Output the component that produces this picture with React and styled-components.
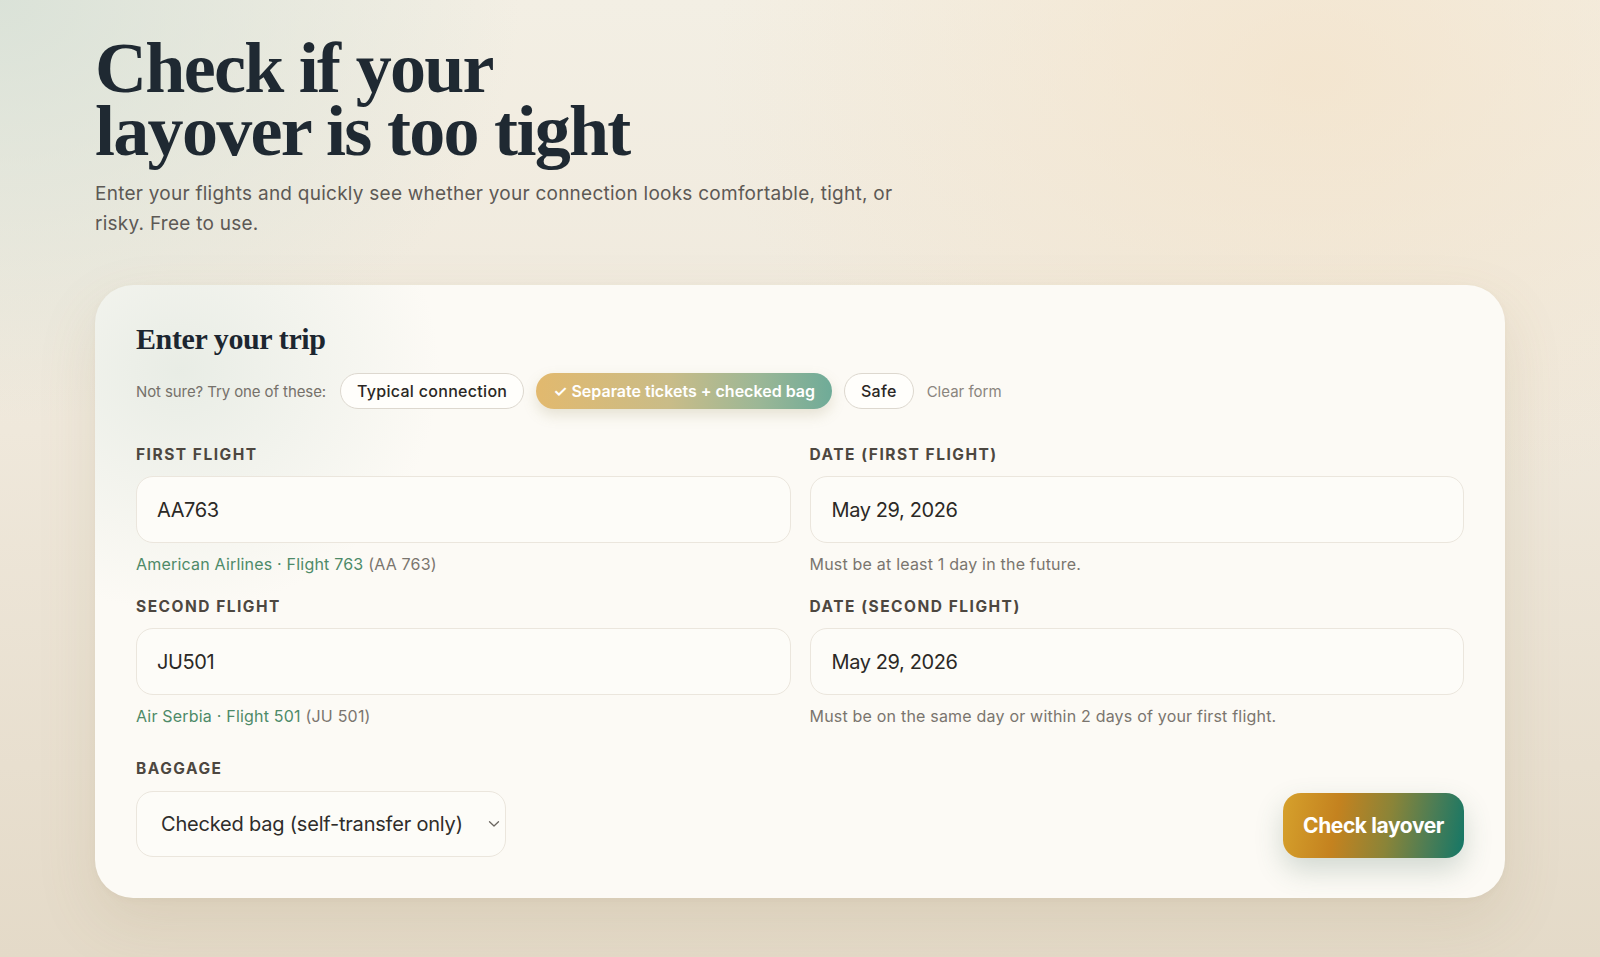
import React from "react";
import styled, { createGlobalStyle } from "styled-components";

const Global = createGlobalStyle`
  * { box-sizing: border-box; }
  html, body { margin: 0; padding: 0; }
  body {
    min-height: 957px;
    font-family: Inter, "Noto Sans", sans-serif;
    background:
      radial-gradient(ellipse 520px 420px at 0% 0%, rgba(214, 224, 214, 0.85), rgba(214, 224, 214, 0) 100%),
      radial-gradient(ellipse 600px 450px at 82% 8%, rgba(244, 226, 200, 0.7), rgba(244, 226, 200, 0) 100%),
      linear-gradient(180deg, #f3efe4 0%, #efe8db 45%, #e8dfcf 80%, #e4dac8 100%);
  }
`;

const Page = styled.main`
  width: 1410px;
  margin: 0 auto;
  padding: 37px 0 40px;
`;

const Title = styled.h1`
  margin: 0;
  font-family: "Liberation Serif", "DejaVu Serif", serif;
  font-weight: 700;
  font-size: 72px;
  line-height: 63px;
  letter-spacing: -1.7px;
  color: #1f2932;
`;

const Lead = styled.p`
  margin: 16px 0 0;
  max-width: 810px;
  font-size: 19px;
  line-height: 29.5px;
  letter-spacing: 0.25px;
  color: #5d5955;
`;

const Card = styled.section`
  margin-top: 47px;
  padding: 36px 41px 41px;
  border-radius: 38px;
  background:
    radial-gradient(ellipse 260px 240px at 6% 14%, rgba(226, 232, 224, 0.75), rgba(226, 232, 224, 0) 100%),
    #fcfaf5;
  box-shadow: 0 24px 60px rgba(140, 115, 70, 0.13), 0 2px 6px rgba(140, 115, 70, 0.05);
`;

const CardTitle = styled.h2`
  margin: 0;
  font-family: "Liberation Serif", "DejaVu Serif", serif;
  font-weight: 700;
  font-size: 30px;
  line-height: 36px;
  letter-spacing: -0.4px;
  color: #1c2630;
`;

const PresetRow = styled.div`
  margin-top: 16px;
  display: flex;
  align-items: center;
  gap: 12px;
`;

const Hint = styled.span`
  font-size: 15px;
  letter-spacing: -0.1px;
  color: #76716a;
  margin-right: 2px;
`;

const Chip = styled.button`
  height: 36px;
  padding: 0 16px;
  border-radius: 18px;
  font-family: Inter, "Noto Sans", sans-serif;
  font-size: 16px;
  font-weight: ${(p) => (p.$active ? 600 : 500)};
  letter-spacing: ${(p) => (p.$active ? "0" : "0.3px")};
  cursor: pointer;
  border: 1px solid ${(p) => (p.$active ? "transparent" : "#ddd8cf")};
  color: ${(p) => (p.$active ? "#ffffff" : "#2a2724")};
  background: ${(p) =>
    p.$active
      ? "linear-gradient(90deg, #e2b96e 0%, #c9bc88 45%, #9cb796 75%, #6fab98 100%) border-box"
      : "#fffefb"};
  box-shadow: ${(p) => (p.$active ? "0 6px 14px rgba(150, 140, 90, 0.22)" : "none")};
`;

const TextLink = styled.button`
  border: 0;
  background: none;
  padding: 0;
  margin-left: 1px;
  font-family: Inter, "Noto Sans", sans-serif;
  font-size: 15px;
  letter-spacing: 0;
  color: #8a857e;
  cursor: pointer;
`;

const Grid = styled.div`
  margin-top: 36px;
  display: grid;
  grid-template-columns: 1fr 1fr;
  column-gap: 19px;
  row-gap: 22px;
`;

const Field = styled.div`
  display: flex;
  flex-direction: column;
`;

const Label = styled.label`
  font-size: 15.5px;
  line-height: 20px;
  font-weight: 700;
  letter-spacing: 1.5px;
  text-transform: uppercase;
  color: #4d4740;
`;

const Input = styled.input`
  margin-top: 11px;
  height: 67px;
  width: 100%;
  padding: 0 ${(p) => p.$pad || 20}px;
  border: 1px solid #ebe6dd;
  border-radius: 17px;
  background: #fdfcf8;
  font-family: Inter, "Noto Sans", sans-serif;
  font-size: 20px;
  letter-spacing: -0.4px;
  color: #2b2926;
  outline: none;
`;

const Help = styled.div`
  margin-top: 10px;
  font-size: 16px;
  line-height: 22px;
  letter-spacing: 0.2px;
  color: #7a756e;
`;

const Airline = styled.span`
  color: #4d8a68;
`;

const Bottom = styled.div`
  margin-top: 32px;
  display: flex;
  align-items: flex-end;
  justify-content: space-between;
`;

const SelectWrap = styled.div`
  position: relative;
  margin-top: 12px;
  width: 370px;
`;

const Select = styled.select`
  appearance: none;
  width: 100%;
  height: 66px;
  padding: 0 30px 0 24px;
  border: 1px solid #ebe6dd;
  border-radius: 17px;
  background: #fdfcf8;
  font-family: Inter, "Noto Sans", sans-serif;
  font-size: 20px;
  letter-spacing: -0.2px;
  color: #2f2d2a;
  outline: none;
`;

const Chevron = styled.svg`
  position: absolute;
  right: 6px;
  top: 50%;
  transform: translateY(-50%);
  pointer-events: none;
`;

const Submit = styled.button`
  width: 181px;
  height: 65px;
  margin-bottom: -1px;
  border: 0;
  border-radius: 18px;
  font-family: Inter, "Noto Sans", sans-serif;
  font-size: 21px;
  font-weight: 700;
  letter-spacing: -0.4px;
  color: #ffffff;
  cursor: pointer;
  background: linear-gradient(100deg, #d6a12c 0%, #c4821f 30%, #8a8438 58%, #4c7d55 80%, #137767 100%);
  box-shadow: 0 12px 28px rgba(60, 100, 80, 0.22);
`;

export default function App() {
  return (
    <>
      <Global />
      <Page>
        <Title>
          Check if your
          <br />
          layover is too tight
        </Title>
        <Lead>
          Enter your flights and quickly see whether your connection looks comfortable, tight, or
          risky. Free to use.
        </Lead>

        <Card>
          <CardTitle>Enter your trip</CardTitle>
          <PresetRow>
            <Hint>Not sure? Try one of these:</Hint>
            <Chip>Typical connection</Chip>
            <Chip $active>✓ Separate tickets + checked bag</Chip>
            <Chip>Safe</Chip>
            <TextLink>Clear form</TextLink>
          </PresetRow>

          <Grid>
            <Field>
              <Label>First flight</Label>
              <Input defaultValue="AA763" />
              <Help>
                <Airline>American Airlines · Flight 763</Airline> (AA 763)
              </Help>
            </Field>
            <Field>
              <Label>Date (first flight)</Label>
              <Input $pad={21} defaultValue="May 29, 2026" />
              <Help>Must be at least 1 day in the future.</Help>
            </Field>
            <Field>
              <Label>Second flight</Label>
              <Input defaultValue="JU501" />
              <Help>
                <Airline>Air Serbia · Flight 501</Airline> (JU 501)
              </Help>
            </Field>
            <Field>
              <Label>Date (second flight)</Label>
              <Input $pad={21} defaultValue="May 29, 2026" />
              <Help>Must be on the same day or within 2 days of your first flight.</Help>
            </Field>
          </Grid>

          <Bottom>
            <Field>
              <Label>Baggage</Label>
              <SelectWrap>
                <Select defaultValue="checked">
                  <option value="checked">Checked bag (self-transfer only)</option>
                  <option value="carry">Carry-on only</option>
                </Select>
                <Chevron width="12" height="8" viewBox="0 0 12 8">
                  <path d="M1.5 1.8 L6 6 L10.5 1.8" fill="none" stroke="#6b6660" strokeWidth="1.3" strokeLinecap="round" strokeLinejoin="round" />
                </Chevron>
              </SelectWrap>
            </Field>
            <Submit>Check layover</Submit>
          </Bottom>
        </Card>
      </Page>
    </>
  );
}
